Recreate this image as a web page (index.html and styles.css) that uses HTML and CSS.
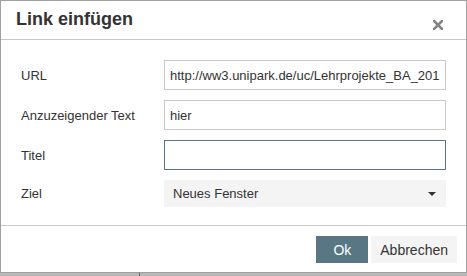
FILE: index.html
```html
<!DOCTYPE html>
<html lang="de">

<head>
  <meta charset="UTF-8">
  <title>Link einfügen</title>
  <link rel="stylesheet" href="styles.css">
</head>

<body>
  <div class="dialog">
    <header class="dialog-head">
      <h1>Link einfügen</h1>
      <button class="close-btn" aria-label="Schließen">
        <svg width="10" height="10" viewBox="0 0 10 10">
          <path d="M1 1 L9 9 M9 1 L1 9" stroke="#858585" stroke-width="2.6" stroke-linecap="square" />
        </svg>
      </button>
    </header>

    <form class="dialog-body">
      <div class="row">
        <label>URL</label>
        <input type="text" value="http://ww3.unipark.de/uc/Lehrprojekte_BA_2016/">
      </div>
      <div class="row">
        <label>Anzuzeigender Text</label>
        <input type="text" value="hier">
      </div>
      <div class="row">
        <label>Titel</label>
        <input type="text" class="focused">
      </div>
      <div class="row row-select">
        <label>Ziel</label>
        <div class="select">
          <span>Neues Fenster</span>
          <span class="caret"></span>
        </div>
      </div>
    </form>

    <footer class="dialog-foot">
      <button class="btn btn-primary">Ok</button>
      <button class="btn">Abbrechen</button>
    </footer>
  </div>

  <div class="backdrop">
    <div class="column"></div>
  </div>
</body>

</html>
```

FILE: styles.css
```css
/* Basic Reset */
* {
  margin: 0;
  padding: 0;
  box-sizing: border-box;
}

body {
  font-family: 'Liberation Sans', Arial, sans-serif;
  background-color: #b8b8b8;
  color: #333;
  width: 467px;
  height: 276px;
  overflow: hidden;
}

/* Dialog */
.dialog {
  width: 467px;
  height: 273px;
  background-color: white;
  border: 1px solid #a0a0a0;
  display: flex;
  flex-direction: column;
}

.dialog-head {
  height: 39px;
  border-bottom: 1px solid #c6c6c6;
  display: flex;
  align-items: center;
  justify-content: space-between;
  padding: 0 23px 0 15px;
}

.dialog-head h1 {
  font-size: 18px;
  font-weight: bold;
  color: #333;
  margin-top: -2px;
}

.close-btn {
  background: none;
  border: none;
  display: flex;
  margin-top: 9px;
  cursor: pointer;
}

.dialog-body {
  flex: 1;
  padding: 20px 20px 0 20px;
  display: flex;
  flex-direction: column;
  gap: 10px;
}

.row {
  display: flex;
  align-items: center;
  height: 30px;
}

.row-select {
  height: 27px;
}

.row label {
  width: 143px;
  font-size: 13px;
  color: #333;
}

.row input {
  width: 282px;
  height: 30px;
  border: 1px solid #c8c8c8;
  padding: 0 5px;
  font-family: inherit;
  font-size: 13px;
  color: #333;
  outline: none;
}

.row input.focused {
  border-color: #5a7584;
}

.select {
  width: 282px;
  height: 27px;
  background-color: #f4f4f4;
  display: flex;
  align-items: center;
  justify-content: space-between;
  padding: 0 10px 0 9px;
  font-size: 13px;
}

.caret {
  width: 0;
  height: 0;
  border-left: 4px solid transparent;
  border-right: 4px solid transparent;
  border-top: 4px solid #333;
}

/* Footer */
.dialog-foot {
  height: 47px;
  border-top: 1px solid #c6c6c6;
  display: flex;
  justify-content: flex-end;
  align-items: flex-start;
  gap: 3px;
  padding: 10px 9px 0 0;
}

.btn {
  height: 27px;
  padding: 0 9px;
  border: none;
  background-color: #f4f4f4;
  color: #333;
  font-family: inherit;
  font-size: 14px;
  cursor: pointer;
}

.btn-primary {
  background-color: #587684;
  color: white;
  padding: 0 17px;
}

/* Page behind the dialog */
.backdrop {
  height: 3px;
  display: flex;
}

.backdrop .column {
  width: 140px;
  border-right: 1px solid #666;
}
```
